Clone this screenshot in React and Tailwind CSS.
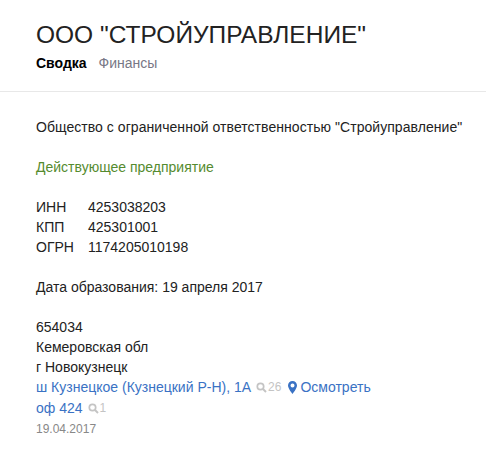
import React from 'react';

const SearchIcon = () => (
    <svg width="11" height="11" viewBox="0 0 11 11" fill="none" stroke="#c4c4c4" className="mr-px">
        <circle cx="4.5" cy="4.5" r="3.2" strokeWidth="1.7" />
        <path d="M7 7l3 3" strokeWidth="2" />
    </svg>
);

const PinIcon = () => (
    <svg width="9" height="13" viewBox="0 0 9 13" className="mr-[3px]">
        <path
            fillRule="evenodd"
            fill="#3a72c4"
            d="M4.5 0C2 0 0 2 0 4.5 0 7.5 4.5 13 4.5 13S9 7.5 9 4.5C9 2 7 0 4.5 0zm0 2.5a2 2 0 1 1 0 4 2 2 0 0 1 0-4z"
        />
    </svg>
);

const Counter = ({ value }) => (
    <span className="inline-flex items-center ml-[5px] text-[12px] text-[#c4c4c4]">
        <SearchIcon />
        {value}
    </span>
);

const App = () => {
    return (
        <div className="w-[486px] h-[449px] bg-white overflow-hidden font-['Arial','Liberation_Sans',sans-serif] text-[14px] leading-5 text-[#222222]">
            <div className="px-9 pt-[18px] pb-[18px] border-b border-[#e8e8e8]">
                <h1 className="text-[24.5px] leading-[34px] text-[#222222] whitespace-nowrap">ООО "СТРОЙУПРАВЛЕНИЕ"</h1>
                <div className="flex gap-3 mt-px">
                    <span className="font-bold text-black">Сводка</span>
                    <span className="text-[#777785]">Финансы</span>
                </div>
            </div>

            <div className="pl-9 pt-[25px]">
                <p className="whitespace-nowrap tracking-[0.05px]">Общество с ограниченной ответственностью "Стройуправление"</p>
                <p className="mt-5 text-[#558b2f]">Действующее предприятие</p>

                <div className="mt-5">
                    <div className="flex"><span className="w-[52px]">ИНН</span><span>4253038203</span></div>
                    <div className="flex"><span className="w-[52px]">КПП</span><span>425301001</span></div>
                    <div className="flex"><span className="w-[52px]">ОГРН</span><span>1174205010198</span></div>
                </div>

                <p className="mt-5">Дата образования: 19 апреля 2017</p>

                <div className="mt-5">
                    <div>654034</div>
                    <div>Кемеровская обл</div>
                    <div>г Новокузнецк</div>
                    <div className="flex items-center">
                        <span className="text-[#3a72c4]">ш Кузнецкое (Кузнецкий Р-Н), 1А</span>
                        <Counter value="26" />
                        <span className="inline-flex items-center ml-[7px] text-[#3a72c4]">
                            <PinIcon />
                            Осмотреть
                        </span>
                    </div>
                    <div className="flex items-center mt-px">
                        <span className="text-[#3a72c4]">оф 424</span>
                        <Counter value="1" />
                    </div>
                    <div className="text-[12px] text-[#888888] mt-px">19.04.2017</div>
                </div>
            </div>
        </div>
    );
};

export default App;
